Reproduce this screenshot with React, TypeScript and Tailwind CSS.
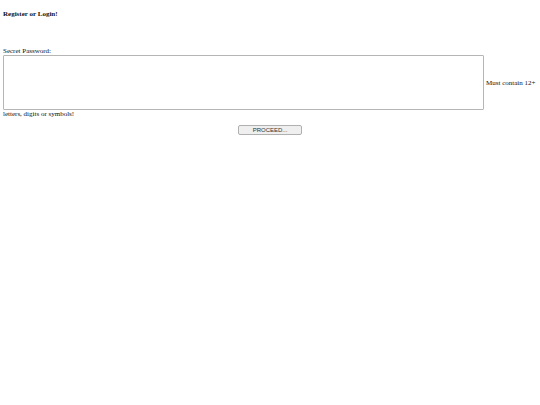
export default function App() {
  return (
    <div className="min-h-[405px] bg-white px-[3px] text-[7px] leading-[8px] text-[#111] font-['Liberation_Serif',serif]">
      <h1 className="pt-[10px] font-bold">Register or Login!</h1>

      <form className="mt-[29px]" onSubmit={(e) => e.preventDefault()}>
        <label className="block">Secret Password:</label>
        <div>
          <textarea className="inline-block h-[55px] w-[481px] resize-none rounded-[1px] border border-[#b5b5b5] align-middle" />
          <span className="ml-[2px] align-middle">Must contain 12+</span>
          <br />
          <span>letters, digits or symbols!</span>
        </div>
        <div className="mt-[7px] flex justify-center">
          <button
            type="submit"
            className="h-[10px] w-[64px] rounded-[2px] border border-[#b0b0b0] bg-[#efefef] text-[6px] leading-[8px] text-[#333] font-['Liberation_Sans',sans-serif]"
          >
            PROCEED...
          </button>
        </div>
      </form>
    </div>
  );
}
